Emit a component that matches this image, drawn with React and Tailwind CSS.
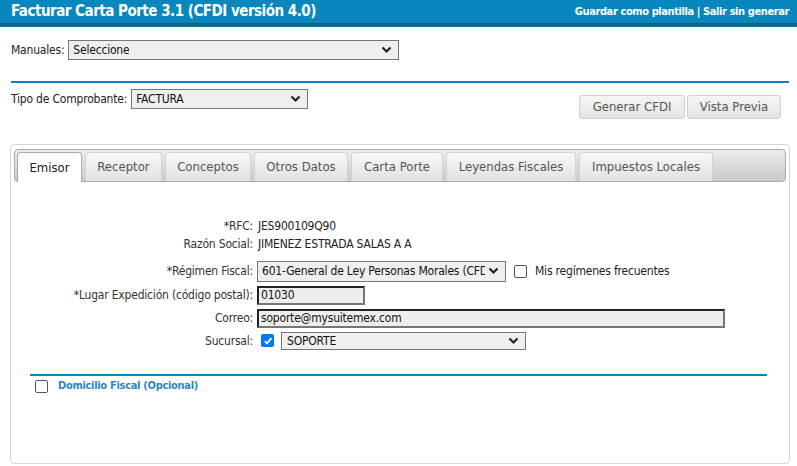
import React from 'react';

const font = { fontFamily: '"DejaVu Sans Condensed", "DejaVu Sans", sans-serif' };

function Chevron() {
  return (
    <svg width="11" height="8" viewBox="0 0 11 8" className="shrink-0">
      <path d="M1.5 1.5 L5.5 5.5 L9.5 1.5" fill="none" stroke="#222" strokeWidth="2.2" />
    </svg>
  );
}

function FakeSelect({ value, className = '', h = 'h-[20px]' }) {
  return (
    <div className={`flex items-center justify-between border border-[#767676] bg-[#efefef] pl-[4px] pr-[6px] ${h} ${className}`}>
      <span className="text-[12px] text-[#111] whitespace-nowrap overflow-hidden mr-[3px]">{value}</span>
      <Chevron />
    </div>
  );
}

function Box({ checked = false }) {
  if (checked) {
    return (
      <div className="w-[13px] h-[13px] rounded-[2px] bg-[#0075ff] flex items-center justify-center">
        <svg width="10" height="10" viewBox="0 0 10 10">
          <path d="M1.8 5.2 L4 7.4 L8.4 2.2" fill="none" stroke="#fff" strokeWidth="1.9" />
        </svg>
      </div>
    );
  }
  return <div className="w-[13px] h-[13px] rounded-[2px] border border-[#555] bg-white" />;
}

const tabs = [
  ['Emisor', 'w-[65px]'],
  ['Receptor', 'w-[77px]'],
  ['Conceptos', 'w-[86px]'],
  ['Otros Datos', 'w-[94px]'],
  ['Carta Porte', 'w-[92px]'],
  ['Leyendas Fiscales', 'w-[130px]'],
  ['Impuestos Locales', 'w-[134px]'],
];

function Row({ label, children, className = 'h-[18px]' }) {
  return (
    <div className={`flex items-center ${className}`}>
      <div className="w-[247px] text-right text-[12px] text-[#333] pr-[5px] shrink-0">{label}</div>
      {children}
    </div>
  );
}

export default function App() {
  return (
    <div style={font} className="w-[797px] h-[466px] bg-white overflow-hidden text-[#222] tracking-[-0.2px]">
      {/* header */}
      <div className="h-[23px] bg-[#0787be] flex items-center justify-between pl-[11px] pr-[8px]">
        <span className="text-white font-bold text-[15px] tracking-[-0.5px] leading-none">Facturar Carta Porte 3.1 (CFDI versión 4.0)</span>
        <span className="text-white font-bold text-[11px] tracking-[-0.4px] leading-none">Guardar como plantilla | Salir sin generar</span>
      </div>
      <div className="h-[4px] bg-gradient-to-b from-[#0a5b82] to-[#156f99]" />

      <div className="pl-[11px] pr-[8px]">
        <div className="mt-[13px] flex items-center h-[20px]">
          <span className="text-[12px] mr-[4px]">Manuales:</span>
          <FakeSelect value="Seleccione" className="w-[331px]" />
        </div>

        <div className="mt-[21px] h-[2px] bg-[#0a86bd]" />

        <div className="flex justify-between items-start">
          <div className="mt-[6px] flex items-center h-[20px]">
            <span className="text-[12px] mr-[4px]">Tipo de Comprobante:</span>
            <FakeSelect value="FACTURA" className="w-[177px]" />
          </div>
          <div className="mt-[12px] mr-[8px] flex gap-[2px] tracking-normal">
            <button className="h-[24px] w-[106px] rounded-[3px] border border-[#cfcfcf] bg-gradient-to-b from-[#f6f6f6] to-[#e3e3e3] text-[13px] text-[#555]">Generar CFDI</button>
            <button className="h-[24px] w-[94px] rounded-[3px] border border-[#cfcfcf] bg-gradient-to-b from-[#f6f6f6] to-[#e3e3e3] text-[13px] text-[#555]">Vista Previa</button>
          </div>
        </div>
      </div>

      {/* tab panel */}
      <div className="mt-[25px] ml-[10px] w-[780px] h-[320px] border border-[#d6d6d6] rounded-[4px] p-[3px] pt-[4px]">
        <div className="h-[33px] rounded-[4px] border border-[#aaaaaa] bg-gradient-to-b from-[#ededed] to-[#c9c9c9] flex items-end gap-[3px] pl-[2px] tracking-normal">
          {tabs.map(([t, w], i) => (
            <div
              key={t}
              className={`${w} h-[29px] rounded-t-[4px] border border-b-0 flex items-center justify-center text-[13px] ${
                i === 0
                  ? 'bg-white border-[#aaaaaa] text-[#222] h-[30px] -mb-[1px]'
                  : 'bg-gradient-to-b from-[#f7f7f7] to-[#e2e2e2] border-[#d3d3d3] text-[#555]'
              }`}
            >
              {t}
            </div>
          ))}
        </div>

        <div className="-ml-[3px]">
          <Row label="*RFC:" className="h-[18px] mt-[35px]">
            <span className="text-[12px] text-[#222]">JES900109Q90</span>
          </Row>
          <Row label="Razón Social:">
            <span className="text-[12px] text-[#222]">JIMENEZ ESTRADA SALAS A A</span>
          </Row>
          <Row label="*Régimen Fiscal:" className="h-[24px] mt-[6px]">
            <FakeSelect value="601-General de Ley Personas Morales (CFDI 3.3 y 4.0)" className="w-[249px] -ml-[1px]" h="h-[21px]" />
            <div className="ml-[8px]"><Box /></div>
            <span className="ml-[8px] text-[12px] text-[#222]">Mis regímenes frecuentes</span>
          </Row>
          <Row label="*Lugar Expedición (código postal):" className="h-[20px] mt-[2px]">
            <div className="-ml-[1px] w-[108px] h-[19px] border-2 border-t-[#222] border-l-[#222] border-b-[#767676] border-r-[#767676] bg-[#eeeeee] flex items-center pl-[2px] text-[12px] text-[#111]">01030</div>
          </Row>
          <Row label="Correo:" className="h-[20px] mt-[3px]">
            <div className="-ml-[1px] w-[468px] h-[19px] border-2 border-t-[#222] border-l-[#222] border-b-[#767676] border-r-[#767676] bg-[#eeeeee] flex items-center pl-[2px] text-[12px] text-[#111]">soporte@mysuitemex.com</div>
          </Row>
          <Row label="Sucursal:" className="h-[19px] mt-[3px]">
            <div className="ml-[3px]"><Box checked /></div>
            <FakeSelect value="SOPORTE" className="ml-[7px] w-[245px] pl-[5px]" h="h-[18px]" />
          </Row>

          <div className="mt-[24px] mx-[19px] h-[2px] bg-[#0a86bd]" />
          <div className="flex items-center mt-[2px] h-[16px] pl-[24px]">
            <Box />
            <span className="ml-[10px] text-[11px] tracking-[-0.3px] font-bold text-[#2b86bf]">Domicilio Fiscal (Opcional)</span>
          </div>
        </div>
      </div>
    </div>
  );
}
